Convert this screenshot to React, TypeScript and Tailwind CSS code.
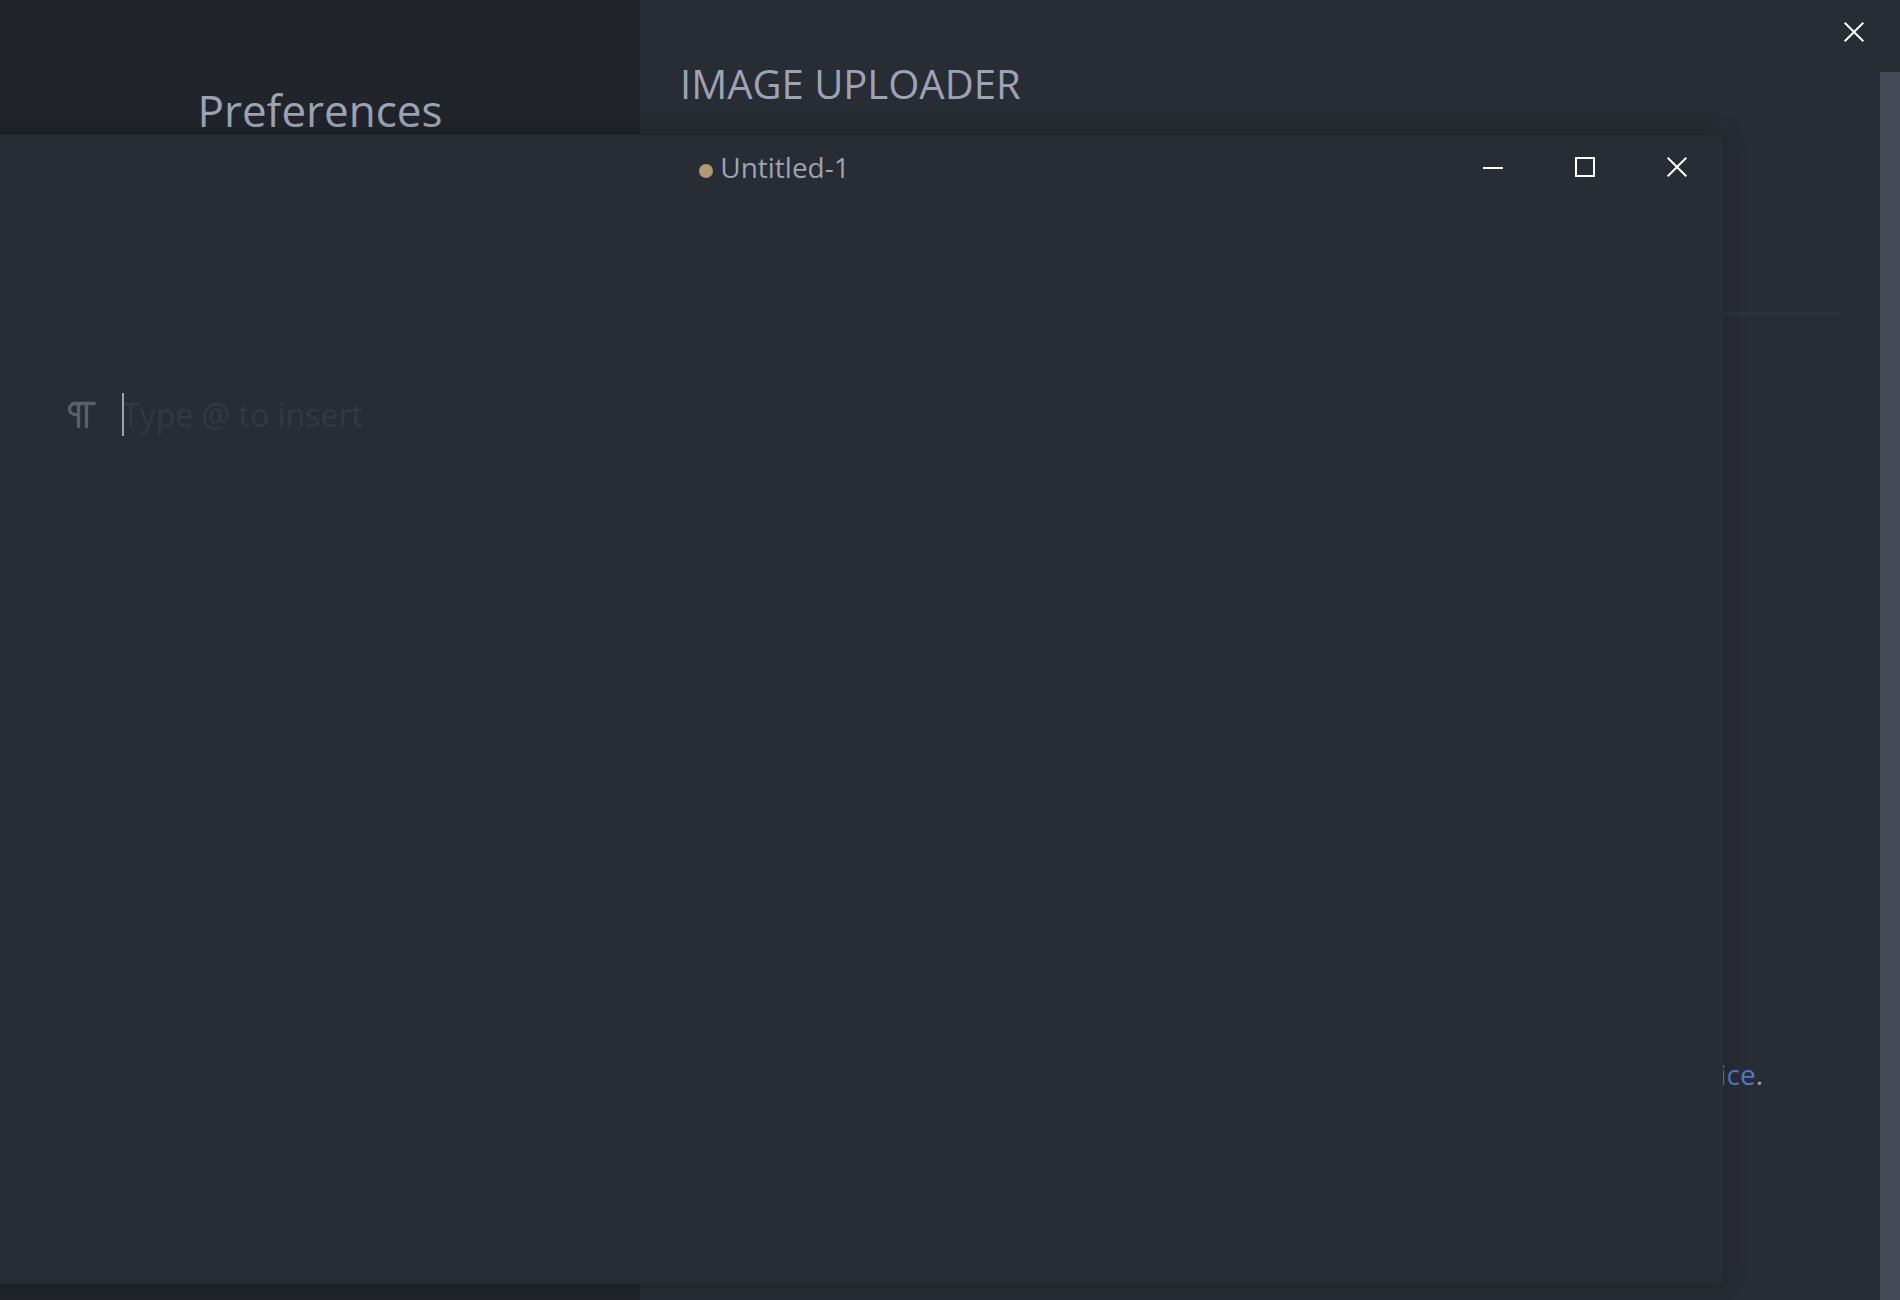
import type { ReactNode } from "react";

function WindowButton({ label, children }: { label: string; children: ReactNode }) {
  return (
    <button type="button" aria-label={label} className="flex h-16 w-[92px] items-center justify-center text-white">
      {children}
    </button>
  );
}

function CrossIcon() {
  return (
    <svg width="20" height="20" viewBox="0 0 10 10" fill="currentColor" aria-hidden="true">
      <path d="M10 .7 9.3 0 5 4.3.7 0 0 .7 4.3 5 0 9.3l.7.7L5 5.7 9.3 10l.7-.7L5.7 5z" />
    </svg>
  );
}

function ParagraphIcon() {
  return (
    <svg
      width="30"
      height="28"
      viewBox="0 0 30 28"
      fill="none"
      stroke="currentColor"
      strokeWidth="3.3"
      strokeLinecap="round"
      strokeLinejoin="round"
      aria-hidden="true"
    >
      <path d="M27.3 2.500H8a5.500 5.500 0 0 0 0 11h3.500M11.500 2.500v23M19.500 2.500v23" />
    </svg>
  );
}

function EditorWindow() {
  return (
    <section
      aria-label="Untitled-1"
      className="absolute top-[135px] right-[177px] bottom-4 -left-[174px] flex flex-col bg-[#282c34] shadow-[0_0_20px_rgba(0,0,0,0.25)]"
    >
      <header className="grid grid-cols-[1fr_auto_1fr] items-center">
        <span />
        <h2 className="flex items-center gap-[7px] text-[28px] leading-16">
          <span className="mt-2 size-3.5 rounded-full bg-[#b09a76]" />
          Untitled-1
        </h2>
        <div className="flex justify-end">
          <WindowButton label="Minimize">
            <span className="mt-0.5 h-0.5 w-5 bg-white" />
          </WindowButton>
          <WindowButton label="Maximize">
            <span className="size-5 border-2 border-white" />
          </WindowButton>
          <WindowButton label="Close window">
            <CrossIcon />
          </WindowButton>
        </div>
      </header>
      <div className="flex items-center pt-48 pl-[241px]">
        <span className="text-[#5b5f68]">
          <ParagraphIcon />
        </span>
        <span className="z-10 mb-0.5 ml-[25px] h-[43px] w-0.5 bg-[#9da2b4]" />
        <input
          aria-label="Paragraph"
          placeholder="Type @ to insert"
          className="-ml-0.5 h-12 min-w-0 flex-1 bg-transparent text-[32px] outline-none placeholder:text-[#343841]"
        />
      </div>
    </section>
  );
}

export default function App() {
  return (
    <div className="relative flex h-screen overflow-hidden bg-[#282c34] font-['Open_Sans',sans-serif] text-[#9da2b4]">
      <aside className="w-[640px] shrink-0 bg-[#21252b] pt-20 text-center">
        <h1 className="text-[44px] leading-[60px]">Preferences</h1>
      </aside>
      <div className="flex min-w-0 flex-1 flex-col">
        <div className="flex h-[72px] shrink-0 justify-end">
          <WindowButton label="Close preferences">
            <CrossIcon />
          </WindowButton>
        </div>
        <div className="-mt-4 flex min-h-0 flex-1">
          <main className="min-w-0 flex-1 px-10">
            <h2 className="text-[40px] leading-14">IMAGE UPLOADER</h2>
            <hr className="mt-50 h-1 border-0 bg-[#2d3139]" />
            <p className="mt-[738px] pr-[77px] text-right text-[28px] leading-10">
              <a href="#terms" className="text-[#4d78cc]">
                Service
              </a>
              .
            </p>
          </main>
          <div className="mt-4 w-5 shrink-0 bg-[#434956]" />
        </div>
      </div>
      <EditorWindow />
    </div>
  );
}
